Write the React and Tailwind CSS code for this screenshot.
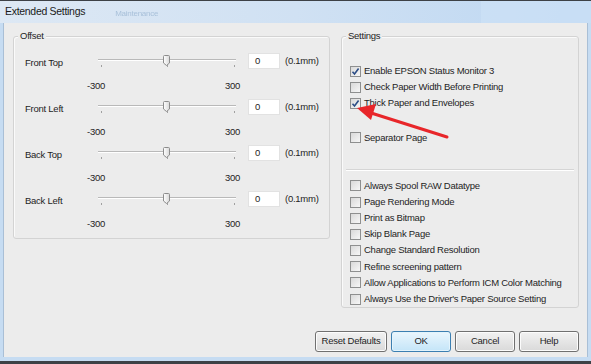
import React from "react";

const font = { fontFamily: '"Liberation Sans", Arial, sans-serif' };

function Thumb() {
  return (
    <svg width="7" height="11" viewBox="0 0 7 11" className="block">
      <defs>
        <linearGradient id="tg" x1="0" x2="1" y1="0" y2="0">
          <stop offset="0" stopColor="#ffffff" />
          <stop offset="1" stopColor="#d8d8d8" />
        </linearGradient>
      </defs>
      <path d="M0.5 1.5 Q0.5 0.5 1.5 0.5 H5.5 Q6.5 0.5 6.5 1.5 V8 L3.5 10.5 L0.5 8 Z" fill="url(#tg)" stroke="#8c8c8c" strokeWidth="1" />
    </svg>
  );
}

function SliderRow({ label }) {
  return (
    <div className="flex flex-col">
      <div className="flex h-[24px] items-start">
        <div className="w-[73px] h-[24px] flex items-center">{label}</div>
        <div className="relative w-[138px] h-[24px]">
          <div className="absolute left-0 right-0 top-[8px] h-[1px] bg-[#b9b9b9]" />
          <div className="absolute left-0 right-0 top-[9px] h-[1px] bg-[#ffffff]" />
          <div className="absolute left-[65px] top-[4px]">
            <Thumb />
          </div>
          <div className="absolute left-[3px] top-[14px] w-[1px] h-[2px] bg-[#a0a0a0]" />
          <div className="absolute left-[69px] top-[14px] w-[1px] h-[2px] bg-[#a0a0a0]" />
          <div className="absolute left-[136px] top-[14px] w-[1px] h-[2px] bg-[#a0a0a0]" />
        </div>
        <div className="ml-[12px] mt-[2px] w-[32px] h-[16px] bg-white border border-[#e2e2e2] flex items-center pl-[6px]">0</div>
        <div className="ml-[5px] h-[20px] flex items-center">(0.1mm)</div>
      </div>
      <div className="flex h-[22px] items-center">
        <div className="ml-[62px] w-[153px] flex justify-between">
          <span>-300</span>
          <span>300</span>
        </div>
      </div>
    </div>
  );
}

function Check({ checked, label }) {
  return (
    <div className="flex items-center h-[16.2px]">
      <div className="w-[11px] h-[11px] border border-[#8e8f8f] bg-gradient-to-br from-[#d9d9d9] to-[#f7f7f7] flex items-center justify-center shrink-0">
        {checked && (
          <svg width="9" height="9" viewBox="0 0 9 9">
            <path d="M1.5 4.8 L3.5 7 L7.6 1.6" fill="none" stroke="#2c4d86" strokeWidth="1.6" />
          </svg>
        )}
      </div>
      <span className="ml-[3px] whitespace-nowrap">{label}</span>
    </div>
  );
}

function Btn({ children, w, primary }) {
  return (
    <div
      className={`${w} h-[21px] rounded-[3px] border flex items-center justify-center ${
        primary
          ? "border-[#3c7fb1] bg-gradient-to-b from-[#eaf6fd] to-[#c4e5f8] shadow-[inset_0_0_0_1px_#e3f4fc]"
          : "border-[#707070] bg-gradient-to-b from-[#f2f2f2] to-[#d9d9d9] shadow-[inset_0_0_0_1px_#fcfcfc]"
      }`}
    >
      {children}
    </div>
  );
}

export default function App() {
  return (
    <div className="relative w-[591px] h-[364px] overflow-hidden bg-[#3d4146] text-[9.5px] tracking-[-0.25px] text-[#1e1e1e] flex flex-col" style={font}>
      <div className="h-[1px] bg-[#3d4146]" />
      <div className="h-[22px] flex items-center bg-gradient-to-r from-[#dde8f4] via-[#d0e1f3] to-[#bdd7f2] relative">
        <span className="pl-[5px] text-[10.5px] tracking-[-0.3px] text-[#1a1a1a]">Extended Settings</span>
        <span className="ml-[30px] mt-[3px] text-[8px] text-[#a9c1da] blur-[0.7px]">Maintenance</span>
        <div className="ml-auto w-[110px] h-[22px] bg-[#cfe3f7] opacity-60" />
      </div>
      <div className="flex h-[334px]">
        <div className="w-[4px] bg-[#c6dcf2] border-r border-[#a9bfd6]" />
        <div className="flex-1 bg-[#ececec] flex flex-col">
          <div className="flex items-start pl-[9px] pt-[13px] gap-[11px]">
            <div className="relative w-[317px] h-[203px] border border-[#d3d3d3] rounded-[3px] pl-[11px] pt-[14px] shadow-[inset_1px_1px_0_#fafafa]">
              <span className="absolute -top-[7px] left-[4px] px-[2px] bg-[#ececec] leading-[12px]">Offset</span>
              <SliderRow label="Front Top" />
              <SliderRow label="Front Left" />
              <SliderRow label="Back Top" />
              <SliderRow label="Back Left" />
            </div>
            <div className="relative w-[238px] h-[272px] border border-[#d3d3d3] rounded-[3px] pl-[8px] pt-[26px] shadow-[inset_1px_1px_0_#fafafa]">
              <span className="absolute -top-[7px] left-[4px] px-[2px] bg-[#ececec] leading-[12px]">Settings</span>
              <Check checked label="Enable EPSON Status Monitor 3" />
              <Check label="Check Paper Width Before Printing" />
              <Check checked label="Thick Paper and Envelopes" />
              <div className="mt-[18px]">
                <Check label="Separator Page" />
              </div>
              <div className="mt-[23px] -ml-[4px] mr-[4px] h-[1px] bg-[#d5d5d5] border-b border-white box-content" />
              <div className="mt-[7px]">
                <Check label="Always Spool RAW Datatype" />
                <Check label="Page Rendering Mode" />
                <Check label="Print as Bitmap" />
                <Check label="Skip Blank Page" />
                <Check label="Change Standard Resolution" />
                <Check label="Refine screening pattern" />
                <Check label="Allow Applications to Perform ICM Color Matching" />
                <Check label="Always Use the Driver's Paper Source Setting" />
              </div>
            </div>
          </div>
          <div className="flex justify-end gap-[4px] pr-[8px] mt-[23px]">
            <Btn w="w-[72px]">Reset Defaults</Btn>
            <Btn w="w-[60px]" primary>OK</Btn>
            <Btn w="w-[60px]">Cancel</Btn>
            <Btn w="w-[60px]">Help</Btn>
          </div>
        </div>
        <div className="w-[4px] bg-[#c6dcf2] border-l border-[#a9bfd6]" />
      </div>
      <div className="h-[4px] bg-[#c6dcf2]" />
      <div className="flex-1 bg-[#3d4146]" />
      <svg className="absolute left-0 top-0 pointer-events-none" width="591" height="364" viewBox="0 0 591 364">
        <line x1="447" y1="137" x2="368" y2="112" stroke="#e8262a" strokeWidth="3" strokeLinecap="round" />
        <path d="M357 108 L376 104 L371 120 Z" fill="#e8262a" />
      </svg>
    </div>
  );
}
